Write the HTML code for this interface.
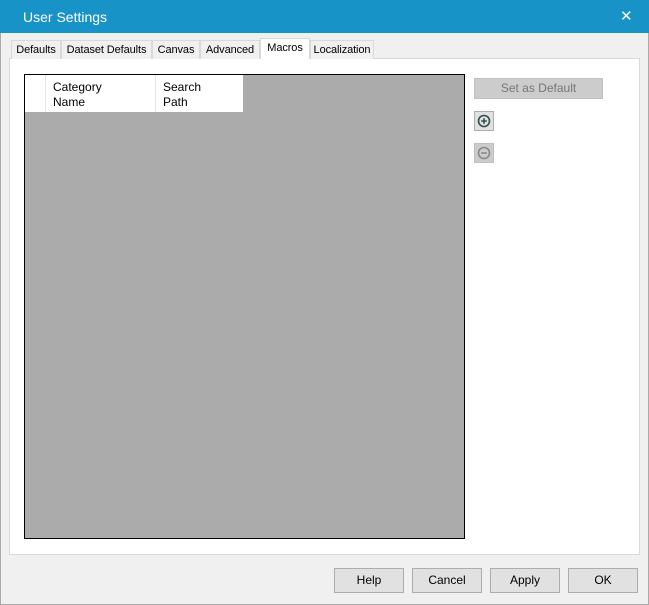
<!DOCTYPE html><html><head><style>
*{margin:0;padding:0;box-sizing:border-box}
body{width:649px;height:605px;background:#f0f0f0;font-family:"Liberation Sans",sans-serif;font-size:12px;color:#000;position:relative;overflow:hidden}
.a{position:absolute}
.title{left:0;top:0;width:649px;height:33px;background:#1793c8;color:#fff;font-size:14px}
.tab{top:40px;height:19px;background:#f0f0f0;border:1px solid #d9d9d9;border-bottom:none;text-align:center;line-height:18px;font-size:11px;letter-spacing:-0.1px}
.btn{top:568px;width:70px;height:25px;border:1px solid #adadad;background:#e1e1e1;text-align:center;line-height:23px}
</style></head><body>
<div class="a title"><span class="a" style="left:23px;top:9px">User Settings</span><span class="a" style="left:620px;top:7px;font-size:15px">✕</span></div>
<div class="a" style="left:0;top:33px;width:1px;height:572px;background:#aaa"></div>
<div class="a" style="left:648px;top:33px;width:1px;height:572px;background:#aaa"></div>
<div class="a" style="left:0;top:604px;width:649px;height:1px;background:#aaa"></div>
<div class="a" style="left:9px;top:58px;width:631px;height:497px;background:#fff;border:1px solid #d9d9d9"></div>
<div class="a tab" style="left:11px;width:50px">Defaults</div>
<div class="a tab" style="left:61px;width:91px">Dataset Defaults</div>
<div class="a tab" style="left:152px;width:48px">Canvas</div>
<div class="a tab" style="left:200px;width:60px">Advanced</div>
<div class="a tab" style="left:260px;top:38px;height:21px;width:50px;background:#fff;line-height:18px">Macros</div>
<div class="a tab" style="left:310px;width:64px">Localization</div>
<div class="a" style="left:24px;top:74px;width:441px;height:465px;background:#ababab;border:1px solid #000"></div>
<div class="a" style="left:25px;top:75px;width:218px;height:37px;background:#fff"></div>
<div class="a" style="left:45px;top:75px;width:1px;height:37px;background:#e5e5e5"></div>
<div class="a" style="left:155px;top:75px;width:1px;height:37px;background:#e5e5e5"></div>
<div class="a" style="left:53px;top:80px;line-height:15px">Category<br>Name</div>
<div class="a" style="left:163px;top:80px;line-height:15px">Search<br>Path</div>
<div class="a" style="left:474px;top:78px;width:129px;height:21px;background:#cccccc;border:1px solid #c0c0c0;color:#777;text-align:center;line-height:19px">Set as Default</div>
<div class="a" style="left:474px;top:111px;width:20px;height:20px;background:#e1e1e1;border:1px solid #adadad"><svg width="18" height="18" viewBox="0 0 18 18"><circle cx="9" cy="9" r="5.5" fill="none" stroke="#2f4f4f" stroke-width="1.6"/><path d="M6.2 9h5.6M9 6.2v5.6" stroke="#2f4f4f" stroke-width="1.6"/></svg></div>
<div class="a" style="left:474px;top:143px;width:20px;height:20px;background:#ccc;border:1px solid #bfbfbf"><svg width="18" height="18" viewBox="0 0 18 18"><circle cx="9" cy="9" r="5.5" fill="none" stroke="#888" stroke-width="1.6"/><path d="M6.2 9h5.6" stroke="#888" stroke-width="1.6"/></svg></div>
<div class="a btn" style="left:334px">Help</div>
<div class="a btn" style="left:412px">Cancel</div>
<div class="a btn" style="left:490px">Apply</div>
<div class="a btn" style="left:568px">OK</div>
</body></html>
